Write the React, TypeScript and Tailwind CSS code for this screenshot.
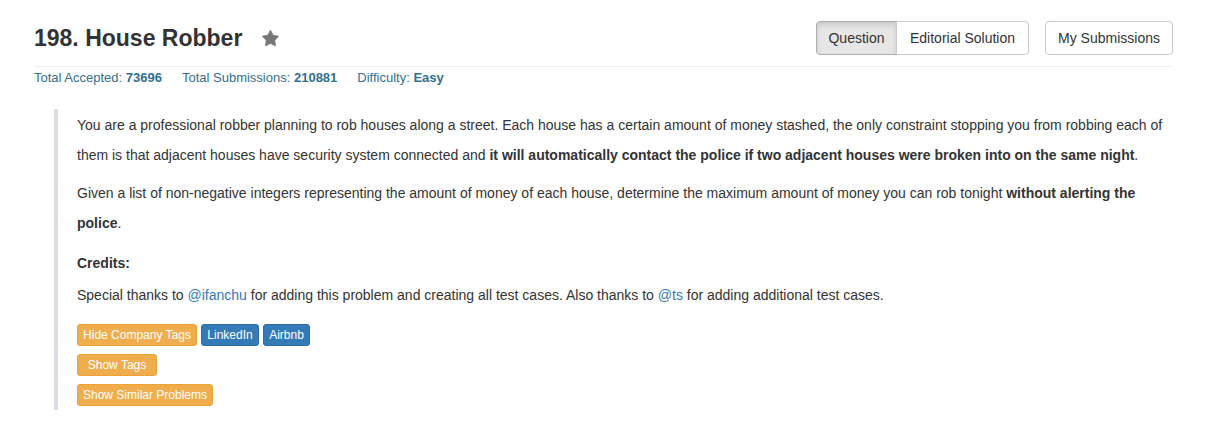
import { Star } from "lucide-react";

const tagBtn = "h-[22px] rounded-[3px] border text-[12px] leading-[20px] text-white text-center";

const Header = () => (
  <div className="flex items-center justify-between border-b border-[#eee] pt-[21px] pb-[11px]">
    <div className="flex items-center">
      <h3 className="text-[23px] font-bold leading-[34px] text-[#333]">198. House Robber</h3>
      <Star className="ml-[19px] h-[19px] w-[19px] fill-[#777] text-[#777]" strokeWidth={1} />
    </div>
    <div className="flex items-center gap-4 text-[14px] text-[#333]">
      <div className="flex">
        <button className="h-[34px] w-[81px] rounded-l-[4px] border border-[#adadad] bg-[#e6e6e6] shadow-[inset_0_3px_5px_rgba(0,0,0,0.125)]">
          Question
        </button>
        <button className="-ml-px h-[34px] w-[133px] rounded-r-[4px] border border-[#ccc] bg-white">
          Editorial Solution
        </button>
      </div>
      <button className="h-[34px] w-[128px] rounded-[4px] border border-[#ccc] bg-white">My Submissions</button>
    </div>
  </div>
);

const Stats = () => (
  <div className="flex gap-5 pt-[1px] text-[13px] leading-[20px] text-[#31708f]">
    <span>
      Total Accepted: <b>73696</b>
    </span>
    <span>
      Total Submissions: <b>210881</b>
    </span>
    <span>
      Difficulty: <b>Easy</b>
    </span>
  </div>
);

const App = () => {
  return (
    <div className="min-h-screen bg-white" style={{ fontFamily: '"Liberation Sans", Arial, sans-serif' }}>
      <div className="ml-[34px] w-[1139px]">
        <Header />
        <Stats />
        <div className="mt-[21px] ml-[20px] border-l-4 border-[#ddd] pl-[19px] pt-px pb-[4px] text-[14px] leading-[30px] text-[#333]">
          <p className="mb-[8px]">
            You are a professional robber planning to rob houses along a street. Each house has a certain amount of
            money stashed, the only constraint stopping you from robbing each of them is that adjacent houses have
            security system connected and{" "}
            <b>it will automatically contact the police if two adjacent houses were broken into on the same night</b>.
          </p>
          <p className="mb-[10px]">
            Given a list of non-negative integers representing the amount of money of each house, determine the maximum
            amount of money you can rob tonight <b>without alerting the police</b>.
          </p>
          <p className="mb-[2px] font-bold">Credits:</p>
          <p>
            Special thanks to <a className="text-[#337ab7]">@ifanchu</a> for adding this problem and creating all test
            cases. Also thanks to <a className="text-[#337ab7]">@ts</a> for adding additional test cases.
          </p>
          <div className="mt-[14px] flex flex-col gap-[8px]">
            <div className="flex gap-[4px]">
              <button className={`${tagBtn} w-[120px] border-[#eea236] bg-[#f0ad4e]`}>Hide Company Tags</button>
              <button className={`${tagBtn} w-[58px] border-[#2e6da4] bg-[#337ab7]`}>LinkedIn</button>
              <button className={`${tagBtn} w-[47px] border-[#2e6da4] bg-[#337ab7]`}>Airbnb</button>
            </div>
            <div className="flex">
              <button className={`${tagBtn} w-[80px] border-[#eea236] bg-[#f0ad4e]`}>Show Tags</button>
            </div>
            <div className="flex">
              <button className={`${tagBtn} w-[136px] border-[#eea236] bg-[#f0ad4e]`}>Show Similar Problems</button>
            </div>
          </div>
        </div>
      </div>
    </div>
  );
};

export default App;
